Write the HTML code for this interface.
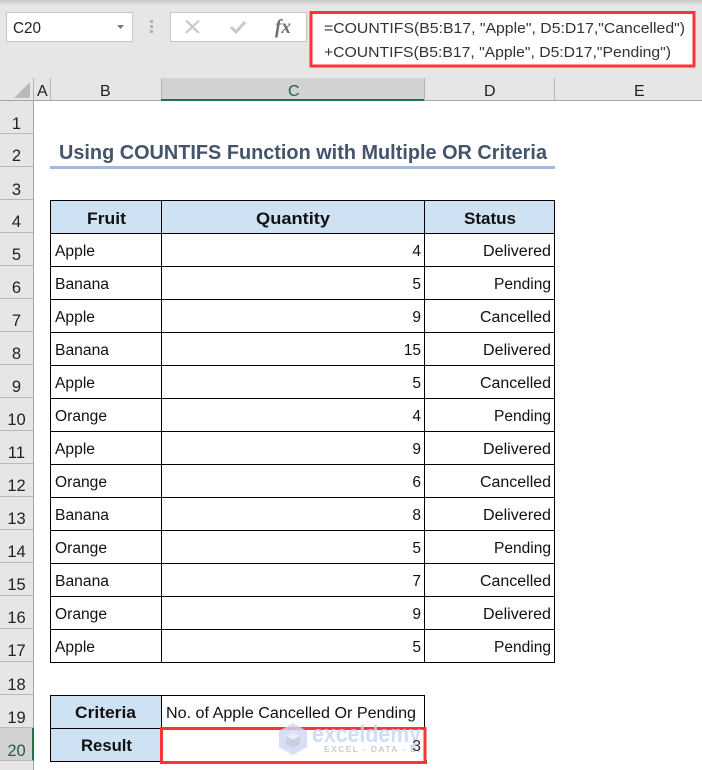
<!DOCTYPE html>
<html><head><meta charset="utf-8"><style>
html,body{margin:0;padding:0;background:#fff}
svg{display:block}
text{font-family:"Liberation Sans",sans-serif;fill:#111}
.c{font-size:15.5px}
.b{font-size:16.5px;font-weight:bold}
.r{font-size:16.5px;fill:#222}
.h{font-size:16px;fill:#222}
.f{font-size:15px;fill:#333}
</style></head><body>
<svg width="702" height="770" viewBox="0 0 702 770" xmlns="http://www.w3.org/2000/svg">
<defs><linearGradient id="g" x1="0" y1="0" x2="0" y2="1"><stop offset="0" stop-color="#c9c9c9"/><stop offset="1" stop-color="#e6e6e6"/></linearGradient></defs>
<rect width="702" height="770" fill="#fff"/>
<!-- ribbon -->
<rect width="702" height="101" fill="#e6e6e6"/>
<rect width="702" height="6" fill="url(#g)"/>
<rect x="6.5" y="12.5" width="126" height="29" fill="#fff" stroke="#c6c6c6"/>
<text x="13" y="33" textLength="28" lengthAdjust="spacingAndGlyphs" style="font-size:16px;fill:#222">C20</text>
<path d="M117 25h7l-3.500 4z" fill="#7a7a7a"/>
<rect x="150" y="20" width="3" height="3" fill="#b0b0b0"/><rect x="150" y="25" width="3" height="3" fill="#b0b0b0"/><rect x="150" y="30" width="3" height="3" fill="#b0b0b0"/>
<rect x="170.500" y="12.500" width="136" height="29" fill="#fff" stroke="#c6c6c6"/>
<path d="M186 20.500l13 12.500M199 20.500l-13 12.500" stroke="#c8c8c8" stroke-width="2.200" fill="none"/>
<path d="M231 27l5 5 9-10" stroke="#c8c8c8" stroke-width="3" fill="none"/>
<text x="275" y="33" textLength="16" lengthAdjust="spacingAndGlyphs" style="font-family:'Liberation Serif',serif;font-style:italic;font-weight:bold;font-size:20px;fill:#6e6e6e">fx</text>
<!-- formula -->
<rect x="311" y="12.500" width="383" height="53.500" fill="#fff" stroke="#ff3333" stroke-width="3"/>
<text x="324" y="33" class="f" textLength="361" lengthAdjust="spacingAndGlyphs">=COUNTIFS(B5:B17, "Apple", D5:D17,"Cancelled")</text>
<text x="324" y="57" class="f" textLength="347" lengthAdjust="spacingAndGlyphs">+COUNTIFS(B5:B17, "Apple", D5:D17,"Pending")</text>
<!-- col headers -->
<rect x="161" y="78" width="263" height="22" fill="#d2d2d2"/>
<path d="M30 82v16H14z" fill="#b9b9b9"/>
<path d="M33.500 78v23M50.500 78v23M161.500 78v22M424.500 78v22M554.500 78v22" stroke="#b4b4b4" fill="none"/>
<rect x="0" y="100" width="702" height="1" fill="#a6a6a6"/>
<rect x="161" y="99" width="263" height="2" fill="#217346"/>
<text x="37" y="96" class="h">A</text>
<text x="100" y="96" class="h">B</text>
<text x="288" y="96" class="h" style="fill:#1f5f45">C</text>
<text x="484" y="96" class="h">D</text>
<text x="634" y="96" class="h">E</text>
<!-- row headers -->
<rect x="0" y="101" width="33" height="669" fill="#e6e6e6"/>
<rect x="0" y="728" width="33" height="33" fill="#d2d2d2"/>
<rect x="33" y="101" width="1" height="669" fill="#a6a6a6"/>
<rect x="32" y="728" width="2" height="33" fill="#217346"/>
<path d="M0 133.500h33M0 166.500h33M0 199.500h33M0 232.500h33M0 265.500h33M0 298.500h33M0 331.500h33M0 364.500h33M0 397.500h33M0 430.500h33M0 463.500h33M0 496.500h33M0 529.500h33M0 562.500h33M0 595.500h33M0 628.500h33M0 661.500h33M0 694.500h33M0 727.500h33M0 760.500h33" stroke="#b9b9b9" fill="none"/>
<g text-anchor="middle">
<text x="16.500" y="129" class="r">1</text><text x="16.500" y="161" class="r">2</text><text x="16.500" y="195" class="r">3</text><text x="16.500" y="227" class="r">4</text><text x="16.500" y="260" class="r">5</text><text x="16.500" y="293" class="r">6</text><text x="16.500" y="326" class="r">7</text><text x="16.500" y="359" class="r">8</text><text x="16.500" y="392" class="r">9</text><text x="16.500" y="425" class="r">10</text><text x="16.500" y="458" class="r">11</text><text x="16.500" y="491" class="r">12</text><text x="16.500" y="524" class="r">13</text><text x="16.500" y="557" class="r">14</text><text x="16.500" y="590" class="r">15</text><text x="16.500" y="623" class="r">16</text><text x="16.500" y="656" class="r">17</text><text x="16.500" y="690" class="r">18</text><text x="16.500" y="723" class="r">19</text><text x="16.500" y="756" class="r" style="fill:#1f5f45">20</text>
</g>
<!-- title -->
<text x="59" y="159" textLength="488" lengthAdjust="spacingAndGlyphs" style="font-size:20.500px;font-weight:bold;fill:#44546a">Using COUNTIFS Function with Multiple OR Criteria</text>
<rect x="50" y="166" width="505" height="3" fill="#a3b8e0"/>
<!-- table -->
<rect x="50" y="200" width="505" height="33" fill="#cfe2f3"/>
<rect x="50" y="695" width="111" height="66" fill="#cfe2f3"/>
<path d="M50.500 200v463M161.500 200v463M424.500 200v463M554.500 200v463M50 200.500h505M50 233.500h505M50 266.500h505M50 299.500h505M50 332.500h505M50 365.500h505M50 398.500h505M50 431.500h505M50 464.500h505M50 497.500h505M50 530.500h505M50 563.500h505M50 596.500h505M50 629.500h505M50 662.500h505M50.500 695v67M161.500 695v67M424.500 695v67M50 695.500h375M50 728.500h375M50 761.500h375" stroke="#000" fill="none"/>
<text x="87" y="224" class="b" textLength="39" lengthAdjust="spacingAndGlyphs">Fruit</text>
<text x="256" y="224" class="b" textLength="74" lengthAdjust="spacingAndGlyphs">Quantity</text>
<text x="464" y="224" class="b" textLength="52" lengthAdjust="spacingAndGlyphs">Status</text>
<text x="55" y="256" class="c" textLength="40" lengthAdjust="spacingAndGlyphs">Apple</text>
<text x="55" y="289" class="c" textLength="54" lengthAdjust="spacingAndGlyphs">Banana</text>
<text x="55" y="322" class="c" textLength="40" lengthAdjust="spacingAndGlyphs">Apple</text>
<text x="55" y="355" class="c" textLength="54" lengthAdjust="spacingAndGlyphs">Banana</text>
<text x="55" y="388" class="c" textLength="40" lengthAdjust="spacingAndGlyphs">Apple</text>
<text x="55" y="421" class="c" textLength="52" lengthAdjust="spacingAndGlyphs">Orange</text>
<text x="55" y="454" class="c" textLength="40" lengthAdjust="spacingAndGlyphs">Apple</text>
<text x="55" y="487" class="c" textLength="52" lengthAdjust="spacingAndGlyphs">Orange</text>
<text x="55" y="520" class="c" textLength="54" lengthAdjust="spacingAndGlyphs">Banana</text>
<text x="55" y="553" class="c" textLength="52" lengthAdjust="spacingAndGlyphs">Orange</text>
<text x="55" y="586" class="c" textLength="54" lengthAdjust="spacingAndGlyphs">Banana</text>
<text x="55" y="619" class="c" textLength="52" lengthAdjust="spacingAndGlyphs">Orange</text>
<text x="55" y="652" class="c" textLength="40" lengthAdjust="spacingAndGlyphs">Apple</text>
<g text-anchor="end">
<text x="421" y="256" class="c">4</text><text x="421" y="289" class="c">5</text><text x="421" y="322" class="c">9</text><text x="421" y="355" class="c">15</text><text x="421" y="388" class="c">5</text><text x="421" y="421" class="c">4</text><text x="421" y="454" class="c">9</text><text x="421" y="487" class="c">6</text><text x="421" y="520" class="c">8</text><text x="421" y="553" class="c">5</text><text x="421" y="586" class="c">7</text><text x="421" y="619" class="c">9</text><text x="421" y="652" class="c">5</text>
</g>
<text x="483" y="256" class="c" textLength="68" lengthAdjust="spacingAndGlyphs">Delivered</text>
<text x="494" y="289" class="c" textLength="57" lengthAdjust="spacingAndGlyphs">Pending</text>
<text x="480" y="322" class="c" textLength="71" lengthAdjust="spacingAndGlyphs">Cancelled</text>
<text x="483" y="355" class="c" textLength="68" lengthAdjust="spacingAndGlyphs">Delivered</text>
<text x="480" y="388" class="c" textLength="71" lengthAdjust="spacingAndGlyphs">Cancelled</text>
<text x="494" y="421" class="c" textLength="57" lengthAdjust="spacingAndGlyphs">Pending</text>
<text x="483" y="454" class="c" textLength="68" lengthAdjust="spacingAndGlyphs">Delivered</text>
<text x="480" y="487" class="c" textLength="71" lengthAdjust="spacingAndGlyphs">Cancelled</text>
<text x="483" y="520" class="c" textLength="68" lengthAdjust="spacingAndGlyphs">Delivered</text>
<text x="494" y="553" class="c" textLength="57" lengthAdjust="spacingAndGlyphs">Pending</text>
<text x="480" y="586" class="c" textLength="71" lengthAdjust="spacingAndGlyphs">Cancelled</text>
<text x="483" y="619" class="c" textLength="68" lengthAdjust="spacingAndGlyphs">Delivered</text>
<text x="494" y="652" class="c" textLength="57" lengthAdjust="spacingAndGlyphs">Pending</text>
<!-- bottom table -->
<text x="75" y="718" class="b" textLength="61" lengthAdjust="spacingAndGlyphs">Criteria</text>
<text x="81" y="751" class="b" textLength="51" lengthAdjust="spacingAndGlyphs">Result</text>
<text x="166" y="718" class="c" textLength="250" lengthAdjust="spacingAndGlyphs">No. of Apple Cancelled Or Pending</text>
<!-- selection -->
<rect x="424" y="760" width="3" height="4" fill="#217346"/>
<rect x="161.500" y="728.500" width="263.500" height="34" fill="none" stroke="#ff3333" stroke-width="3"/>
<!-- watermark, drawn over the selection -->
<g opacity="0.8">
<path d="M293 723l14 8v16l-14 8-14-8v-16z" fill="#cdd8f7"/>
<path d="M293 732l7 4v8l-7 4-7-4v-8z" fill="#bcc4d8"/>
<path d="M293 732l7 4-7 4-7-4z" fill="#e6ebf8"/>
<text x="312" y="742" textLength="109" lengthAdjust="spacingAndGlyphs" style="font-size:24px;font-weight:bold;fill:#c6d4f8">exceldemy</text>
</g>
<text x="324" y="752" textLength="96" lengthAdjust="spacing" style="font-size:8.500px;font-weight:bold;fill:#c9ccd2">EXCEL - DATA - BI</text>
<text x="421" y="751" class="c" style="font-size:16px;fill:#333" text-anchor="end">3</text>
</svg>
</body></html>
